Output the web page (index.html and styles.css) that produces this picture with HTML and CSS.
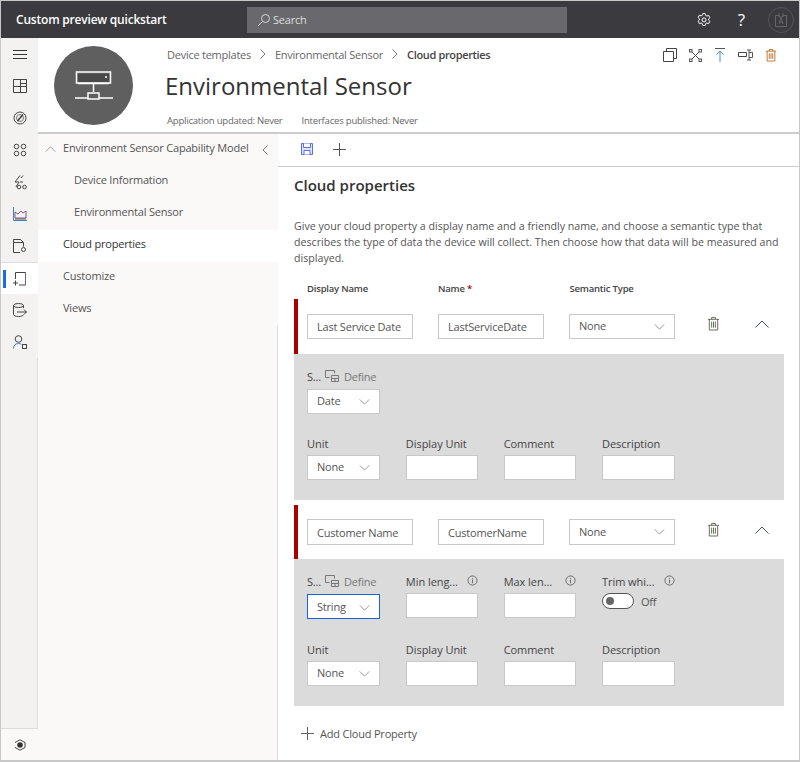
FILE: index.html
```html
<!DOCTYPE html>
<html lang="en">
<head>
    <meta charset="UTF-8">
    <title>Custom preview quickstart</title>
    <link rel="stylesheet" href="styles.css">
</head>
<body>
<svg class="defs" width="0" height="0">
    <symbol id="i-trash" viewBox="0 0 14 16"><path d="M1 3.500h12M5 3.500V1.500h4v2M2.500 3.500v11.500h9V3.500M5 6v6.500M7 6v6.500M9 6v6.500" fill="none" stroke="currentColor"/></symbol>
    <symbol id="i-up" viewBox="0 0 14 8"><path d="M.5 7.500L7 1l6.500 6.500" fill="none" stroke="currentColor"/></symbol>
    <symbol id="i-down" viewBox="0 0 12 7"><path d="M.5 .5L6 6l5.500-5.500" fill="none" stroke="currentColor"/></symbol>
    <symbol id="i-define" viewBox="0 0 14 12"><path d="M9.500 3.500V.5H.5v7h4M6.500 5.500h7v6h-7zM6.500 8.500h7M9 10h2" fill="none" stroke="currentColor"/></symbol>
    <symbol id="i-info" viewBox="0 0 12 12"><circle cx="6" cy="6" r="5" fill="none" stroke="currentColor"/><path d="M6 5v4M6 3v1" stroke="currentColor" fill="none"/></symbol>
    <symbol id="i-plus" viewBox="0 0 14 14"><path d="M7 0v14M0 7h14" fill="none" stroke="currentColor"/></symbol>
</svg>

<div class="window">
    <!-- Barra superior -->
    <header class="topbar">
        <div class="app-name">Custom preview quickstart</div>
        <div class="search">
            <svg width="14" height="14" viewBox="0 0 14 14"><circle cx="8.500" cy="5.500" r="4" fill="none" stroke="#d8d8d8"/><path d="M5.500 8.500L1 13" stroke="#d8d8d8"/></svg>
            <span>Search</span>
        </div>
        <div class="top-actions">
            <svg class="top-gear" width="14" height="14" viewBox="0 0 14 14"><path d="M5.700 .7h2.600l.4 1.800 1.200.6 1.700-.7 1.300 2.300-1.300 1.200v1.300l1.300 1.200-1.300 2.300-1.700-.7-1.200.6-.4 1.800H5.700l-.4-1.800-1.200-.6-1.700.7L1.100 8.200l1.300-1.200V5.700L1.100 4.500l1.300-2.300 1.700.7 1.200-.6z" fill="none" stroke="#fff"/><circle cx="7" cy="6.900" r="2" fill="none" stroke="#fff"/></svg>
            <span class="top-help">?</span>
            <div class="me">
                <svg width="14" height="16" viewBox="0 0 14 16"><path d="M5 3.500H1.500v11h11v-11H9M5 1v4h4V1M5 12l2-6 2 6M5.800 10h2.400" fill="none" stroke="#66656a"/></svg>
            </div>
        </div>
    </header>

    <div class="body-row">
        <!-- Menu lateral -->
        <nav class="rail">
            <div class="rail-item"><svg width="14" height="9" viewBox="0 0 14 9"><path d="M0 .5h14M0 4.500h14M0 8.500h14" stroke="#333"/></svg></div>
            <div class="rail-item"><svg width="14" height="14" viewBox="0 0 14 14"><path d="M.5 .5h13v13H.5zM.5 7.500h13M7.500 .5v13M7.500 4.500h6" fill="none" stroke="#444"/></svg></div>
            <div class="rail-item"><svg width="14" height="14" viewBox="0 0 14 14"><circle cx="7" cy="7" r="6" fill="none" stroke="#444"/><circle cx="7" cy="7" r="3.500" fill="none" stroke="#777"/><path d="M4.500 10L10 3.500" stroke="#333" stroke-width="1.300"/></svg></div>
            <div class="rail-item"><svg width="14" height="14" viewBox="0 0 14 14"><g fill="none" stroke="#444"><circle cx="3.500" cy="3.500" r="2.300"/><circle cx="10.500" cy="3.500" r="2.300"/><circle cx="3.500" cy="10.500" r="2.300"/><circle cx="10.500" cy="10.500" r="2.300"/></g></svg></div>
            <div class="rail-item"><svg width="14" height="15" viewBox="0 0 14 15"><path d="M7 .5L2 7h4L3 12M8 3l2-2.500M7 7h3" fill="none" stroke="#444"/><circle cx="6" cy="12" r="1.800" fill="none" stroke="#444"/><circle cx="11.500" cy="12" r="1.800" fill="none" stroke="#444"/></svg></div>
            <div class="rail-item"><svg width="14" height="14" viewBox="0 0 14 14"><path d="M.5 0v13.500H14" fill="none" stroke="#3f7fc4"/><path d="M2 11V5l3 2 3-3 2 2 3-2v7z" fill="none" stroke="#7a5a8c"/><path d="M2 12h11" stroke="#555"/></svg></div>
            <div class="rail-item"><svg width="14" height="14" viewBox="0 0 14 14"><path d="M7 13.500H.5V.5h7l3 3v4M.5 3.500h10" fill="none" stroke="#444"/><circle cx="10.500" cy="10.500" r="2" fill="none" stroke="#444"/></svg></div>
            <div class="rail-item rail-active"><svg width="14" height="14" viewBox="0 0 14 14"><path d="M2.500 7V.5h10v12.500H6" fill="none" stroke="#444"/><path d="M12.500 .5v12.500" stroke="#7a5a8c"/><path d="M2.500 8.500v5M0 11h5" fill="none" stroke="#444"/></svg></div>
            <div class="rail-item"><svg width="14" height="14" viewBox="0 0 14 14"><ellipse cx="5.500" cy="2.500" rx="5" ry="2" fill="none" stroke="#444"/><path d="M.5 2.500v9c0 1 2 2 5 2s4-.7 5-1.500M10.500 2.500V5M4 9h9.500M11 6.500L13.500 9 11 11.500" fill="none" stroke="#444"/></svg></div>
            <div class="rail-item"><svg width="14" height="14" viewBox="0 0 14 14"><circle cx="5.500" cy="4" r="3.300" fill="none" stroke="#444"/><path d="M.5 13.500c0-3 2-5 5-5 1 0 2 .2 2.800.8" fill="none" stroke="#3f7fc4"/><rect x="9.500" y="9.500" width="4" height="4" fill="none" stroke="#444"/></svg></div>
            <div class="rail-fill"></div>
            <div class="rail-bottom"><svg width="12" height="12" viewBox="0 0 12 12"><path d="M1 3.500L6 .8l5 2.700v5L6 11.200 1 8.500" fill="none" stroke="#444"/><circle cx="6" cy="6" r="2.800" fill="#333"/></svg></div>
        </nav>

        <div class="content">
            <!-- Encabezado de la plantilla -->
            <section class="page-head">
                <div class="avatar">
                    <svg width="38" height="30" viewBox="0 0 38 30"><g fill="none" stroke="#fff" stroke-width="1.500"><path d="M1.500 1h34v11h-34z"/><path d="M3 12.500h31"/><path d="M18.500 13v8M0 27h13M24 27h14M13 22h11v6H13z"/></g><rect x="3" y="3" width="31" height="8" fill="#4a4a4a"/><circle cx="31" cy="6" r="1" fill="#fff"/></svg>
                </div>
                <div class="head-text">
                    <div class="crumbs">
                        <span>Device templates</span>
                        <svg class="crumb-sep" width="6" height="10" viewBox="0 0 6 10"><path d="M.5 .5L5 5 .5 9.500" fill="none" stroke="#777"/></svg>
                        <span>Environmental Sensor</span>
                        <svg class="crumb-sep" width="6" height="10" viewBox="0 0 6 10"><path d="M.5 .5L5 5 .5 9.500" fill="none" stroke="#777"/></svg>
                        <b>Cloud properties</b>
                    </div>
                    <h1>Environmental Sensor</h1>
                    <div class="status">
                        <span>Application updated: Never</span>
                        <span>Interfaces published: Never</span>
                    </div>
                </div>
                <div class="head-actions">
                    <svg width="14" height="14" viewBox="0 0 14 14"><path d="M.5 3.500h10v10H.5zM3.500 3.500v-3h10v10h-3" fill="none" stroke="#444"/></svg>
                    <svg width="13" height="13" viewBox="0 0 13 13"><path d="M2 2l9 9M11 2l-9 9" stroke="#444"/><g fill="#fff" stroke="#555"><rect x=".5" y=".5" width="2.500" height="2.500"/><rect x="10" y=".5" width="2.500" height="2.500"/><rect x=".5" y="10" width="2.500" height="2.500"/><rect x="10" y="10" width="2.500" height="2.500"/></g></svg>
                    <svg width="12" height="14" viewBox="0 0 12 14"><path d="M1 .5h10" stroke="#555"/><path d="M6 3v11M2.500 6.500L6 3l3.500 3.500" fill="none" stroke="#4a90c8"/></svg>
                    <svg width="15" height="12" viewBox="0 0 15 12"><path d="M.5 3.500h8v4h-8z" fill="none" stroke="#444"/><path d="M9 1h4M9 11h4M11 1v10M11 3.500h3.500v5H11" fill="none" stroke="#555"/></svg>
                    <svg class="trash-orange" width="12" height="14"><use href="#i-trash"/></svg>
                </div>
            </section>

            <div class="work">
                <!-- Arbol de capacidades -->
                <aside class="tree">
                    <div class="tree-item tree-root">
                        <svg class="tree-up" width="11" height="6"><use href="#i-up"/></svg>
                        <span>Environment Sensor Capability Model</span>
                        <svg class="tree-collapse" width="6" height="10" viewBox="0 0 6 10"><path d="M5.500 .5L1 5l4.500 4.500" fill="none" stroke="#777"/></svg>
                    </div>
                    <div class="tree-item tree-child">Device Information</div>
                    <div class="tree-item tree-child">Environmental Sensor</div>
                    <div class="tree-item tree-selected">Cloud properties</div>
                    <div class="tree-item">Customize</div>
                    <div class="tree-item">Views</div>
                    <div class="tree-fill"></div>
                </aside>

                <main class="main">
                    <div class="toolbar">
                        <svg width="12" height="12" viewBox="0 0 12 12"><path d="M.5 .5h11v11H.5z" fill="#dfe3ff" stroke="#5a6cf0"/><path d="M2.500 .5v4h7v-4M3 11.500v-4h6v4" fill="#fff" stroke="#5a6cf0"/></svg>
                        <svg class="tool-plus" width="13" height="13"><use href="#i-plus"/></svg>
                    </div>

                    <div class="panel">
                        <h2>Cloud properties</h2>
                        <p class="intro">Give your cloud property a display name and a friendly name, and choose a semantic type that describes the type of data the device will collect. Then choose how that data will be measured and displayed.</p>

                        <div class="col-heads">
                            <span>Display Name</span>
                            <span>Name <i>*</i></span>
                            <span>Semantic Type</span>
                        </div>

                        <!-- Propiedad 1 -->
                        <div class="prop-row">
                            <div class="field-box">Last Service Date</div>
                            <div class="field-box">LastServiceDate</div>
                            <div class="field-box select">None<svg width="11" height="6"><use href="#i-down"/></svg></div>
                            <svg class="row-trash" width="13" height="15"><use href="#i-trash"/></svg>
                            <svg class="row-up" width="14" height="8"><use href="#i-up"/></svg>
                        </div>
                        <div class="prop-detail">
                            <div class="detail-grid grid-first">
                                <div>
                                    <div class="schema-label"><b>S...</b><svg width="14" height="12"><use href="#i-define"/></svg><span>Define</span></div>
                                    <div class="field-box select">Date<svg width="11" height="6"><use href="#i-down"/></svg></div>
                                </div>
                            </div>
                            <div class="detail-grid">
                                <div><label>Unit</label><div class="field-box select">None<svg width="11" height="6"><use href="#i-down"/></svg></div></div>
                                <div><label>Display Unit</label><div class="field-box"></div></div>
                                <div><label>Comment</label><div class="field-box"></div></div>
                                <div><label>Description</label><div class="field-box"></div></div>
                            </div>
                        </div>

                        <!-- Propiedad 2 -->
                        <div class="prop-row prop-second">
                            <div class="field-box">Customer Name</div>
                            <div class="field-box">CustomerName</div>
                            <div class="field-box select">None<svg width="11" height="6"><use href="#i-down"/></svg></div>
                            <svg class="row-trash" width="13" height="15"><use href="#i-trash"/></svg>
                            <svg class="row-up" width="14" height="8"><use href="#i-up"/></svg>
                        </div>
                        <div class="prop-detail">
                            <div class="detail-grid grid-first grid-tall">
                                <div>
                                    <div class="schema-label"><b>S...</b><svg width="14" height="12"><use href="#i-define"/></svg><span>Define</span></div>
                                    <div class="field-box select focused">String<svg width="11" height="6"><use href="#i-down"/></svg></div>
                                </div>
                                <div><label class="with-info">Min leng...<svg width="11" height="11"><use href="#i-info"/></svg></label><div class="field-box"></div></div>
                                <div><label class="with-info">Max len...<svg width="11" height="11"><use href="#i-info"/></svg></label><div class="field-box"></div></div>
                                <div>
                                    <label class="with-info">Trim whi...<svg width="11" height="11"><use href="#i-info"/></svg></label>
                                    <div class="toggle-row"><span class="toggle"></span><span>Off</span></div>
                                </div>
                            </div>
                            <div class="detail-grid">
                                <div><label>Unit</label><div class="field-box select">None<svg width="11" height="6"><use href="#i-down"/></svg></div></div>
                                <div><label>Display Unit</label><div class="field-box"></div></div>
                                <div><label>Comment</label><div class="field-box"></div></div>
                                <div><label>Description</label><div class="field-box"></div></div>
                            </div>
                        </div>

                        <div class="add-prop">
                            <svg width="13" height="13"><use href="#i-plus"/></svg>
                            <span>Add Cloud Property</span>
                        </div>
                    </div>
                </main>
            </div>
        </div>
    </div>
</div>
</body>
</html>
```

FILE: styles.css
```css
* {
    box-sizing: border-box;
}
html, body {
    margin: 0;
    height: 100%;
    overflow: hidden;
}
body {
    font-family: "Open Sans", "Noto Sans", sans-serif;
    font-size: 11px;
    letter-spacing: -0.2px;
    color: #444;
    background-color: #fff;
}
svg {
    display: block;
    flex: none;
}
.defs {
    position: absolute;
}
.window {
    display: flex;
    flex-direction: column;
    width: 800px;
    height: 762px;
    border: 1px solid #c8c8c8;
    border-width: 1px 1px 2px 1px;
}

/* Barra superior */
.topbar {
    display: flex;
    align-items: center;
    height: 37px;
    flex: none;
    background-color: #3b3a3f;
    color: #fff;
}
.app-name {
    width: 246px;
    padding-left: 15px;
    font-size: 12px;
    font-weight: 600;
}
.search {
    display: flex;
    align-items: center;
    gap: 2px;
    width: 320px;
    height: 26px;
    padding-left: 10px;
    background-color: #69686c;
    color: #ddd;
    font-size: 11px;
}
.top-actions {
    display: flex;
    align-items: center;
    margin-left: auto;
    padding-right: 5px;
}
.top-help {
    margin-left: 27px;
    font-size: 17px;
    line-height: 1;
}
.me {
    display: flex;
    align-items: center;
    justify-content: center;
    width: 26px;
    height: 26px;
    margin-left: 23px;
    border: 1px solid #55545a;
    border-radius: 50%;
}

.body-row {
    display: flex;
    flex: 1;
    min-height: 0;
}

/* Menu lateral */
.rail {
    display: flex;
    flex-direction: column;
    width: 37px;
    flex: none;
    background-color: #f3f2f1;
}
.rail-item {
    position: relative;
    display: flex;
    align-items: center;
    justify-content: center;
    height: 32px;
    flex: none;
}
.rail-active {
    background-color: #fff;
    border-top: 1px solid #ddd;
}
.rail-active::before {
    content: "";
    position: absolute;
    left: 2px;
    top: 7px;
    width: 3px;
    height: 18px;
    background-color: #1a6ce8;
}
.rail-fill {
    flex: 1;
    border-right: 1px solid #ddd;
}
.rail-bottom {
    display: flex;
    align-items: center;
    justify-content: center;
    height: 32px;
    flex: none;
    border-top: 1px solid #ddd;
    background-color: #faf9f8;
}

.content {
    display: flex;
    flex-direction: column;
    flex: 1;
    min-width: 0;
}

/* Encabezado */
.page-head {
    display: flex;
    height: 96px;
    flex: none;
    border-bottom: 2px solid #ccc;
}
.avatar {
    display: flex;
    align-items: center;
    justify-content: center;
    width: 79px;
    height: 79px;
    margin: 8px 0 0 16px;
    border-radius: 50%;
    background-color: #5f5f5f;
}
.head-text {
    margin-left: 32px;
    padding-top: 8px;
}
.crumbs {
    display: flex;
    align-items: center;
    gap: 9px;
    height: 16px;
    padding-left: 2px;
    font-size: 11px;
    letter-spacing: -0.25px;
    color: #666;
    white-space: nowrap;
}
.crumbs b {
    font-weight: 600;
    letter-spacing: -0.35px;
    color: #444;
}
h1 {
    margin: 7px 0 0;
    font-size: 24px;
    font-weight: 400;
    letter-spacing: 0;
    line-height: 33px;
    color: #333;
    white-space: nowrap;
}
.status {
    display: flex;
    gap: 19px;
    margin-top: 12px;
    padding-left: 2px;
    font-size: 9.500px;
    color: #666;
    white-space: nowrap;
}
.head-actions {
    display: flex;
    align-items: center;
    gap: 12px;
    height: 14px;
    margin: 10px 0 0 auto;
    padding-right: 22px;
}
.trash-orange {
    color: #b5651d;
}

.work {
    display: flex;
    flex: 1;
    min-height: 0;
}

/* Arbol */
.tree {
    display: flex;
    flex-direction: column;
    width: 240px;
    flex: none;
    background-color: #faf9f8;
}
.tree-item {
    display: flex;
    align-items: center;
    height: 32px;
    flex: none;
    padding: 0 0 5px 25px;
    color: #555;
    white-space: nowrap;
}
.tree-root {
    position: relative;
}
.tree-up {
    position: absolute;
    left: 7px;
    top: 12px;
    color: #888;
}
.tree-collapse {
    position: absolute;
    left: 224px;
    top: 11px;
}
.tree-child {
    padding-left: 36px;
}
.tree-selected {
    background-color: #fff;
    color: #333;
}
.tree-fill {
    flex: 1;
    border-right: 1px solid #ddd;
}

/* Panel principal */
.main {
    flex: 1;
    min-width: 0;
}
.toolbar {
    display: flex;
    align-items: center;
    gap: 20px;
    height: 33px;
    padding: 0 0 2px 23px;
    border-bottom: 1px solid #ccc;
}
.tool-plus {
    color: #4a4a4a;
}
.panel {
    padding: 6px 15px 0 16px;
}
h2 {
    margin: 0;
    font-size: 15px;
    font-weight: 600;
    letter-spacing: 0;
    line-height: 24px;
    color: #333;
}
.intro {
    margin: 21px 0 0;
    font-size: 10.650px;
    letter-spacing: 0;
    line-height: 16px;
    color: #555;
}
.col-heads {
    display: grid;
    grid-template-columns: 131px 131.500px 131px;
    height: 16px;
    margin-top: 15px;
    padding-left: 13px;
    font-size: 9.500px;
    font-weight: 600;
    line-height: 16px;
    color: #444;
}
.col-heads i {
    color: #a80000;
    font-style: normal;
}
.prop-row {
    display: flex;
    align-items: center;
    height: 55px;
    margin-top: 2px;
    padding-left: 9px;
    border-left: 4px solid #a80000;
}
.prop-second {
    height: 54px;
    margin-top: 5px;
}
.prop-second .field-box {
    height: 26px;
}
.prop-row .field-box {
    width: 106px;
    margin-right: 25px;
}
.field-box {
    display: flex;
    align-items: center;
    justify-content: space-between;
    width: 100%;
    height: 25px;
    padding: 0 9px;
    background-color: #fff;
    border: 1px solid #c8c8c8;
    color: #555;
    white-space: nowrap;
}
.select {
    padding-bottom: 2px;
}
.select svg {
    margin-top: 2px;
    color: #888;
}
.focused {
    padding-bottom: 0;
    border-color: #1565d8;
}
.row-trash {
    margin: -6px 0 0 7px;
    color: #5c6650;
}
.row-up {
    margin: -5px 0 0 35px;
    color: #3f5a6b;
}
.prop-detail {
    padding: 15px 13px 20px;
    background-color: #dbdbdb;
}
.detail-grid {
    display: grid;
    grid-template-columns: 73px 72px 72.500px 73px;
    column-gap: 25.830px;
}
.grid-first {
    margin-bottom: 22px;
}
.grid-tall {
    margin-bottom: 23px;
}
label {
    display: flex;
    align-items: center;
    height: 16px;
    margin-bottom: 3px;
    padding-bottom: 2px;
    letter-spacing: -0.05px;
    color: #444;
    white-space: nowrap;
}
.with-info {
    justify-content: space-between;
}
.with-info svg {
    margin-top: -2px;
    color: #666;
}
.schema-label {
    display: flex;
    align-items: center;
    gap: 4px;
    height: 16px;
    margin-bottom: 4px;
    padding-bottom: 2px;
    color: #777;
    white-space: nowrap;
}
.schema-label b {
    font-weight: 400;
    color: #444;
}
.schema-label span {
    margin-left: 1px;
}
.toggle-row {
    display: flex;
    align-items: center;
    gap: 7px;
    margin-top: 1px;
    color: #555;
}
.toggle {
    position: relative;
    width: 32px;
    height: 16px;
    border: 1px solid #555;
    border-radius: 8px;
    background-color: #fff;
}
.toggle::after {
    content: "";
    position: absolute;
    left: 3px;
    top: 3px;
    width: 8px;
    height: 8px;
    border-radius: 50%;
    background-color: #666;
}
.add-prop {
    display: flex;
    align-items: center;
    gap: 6px;
    margin-top: 20px;
    padding-left: 7px;
    color: #555;
}
```
